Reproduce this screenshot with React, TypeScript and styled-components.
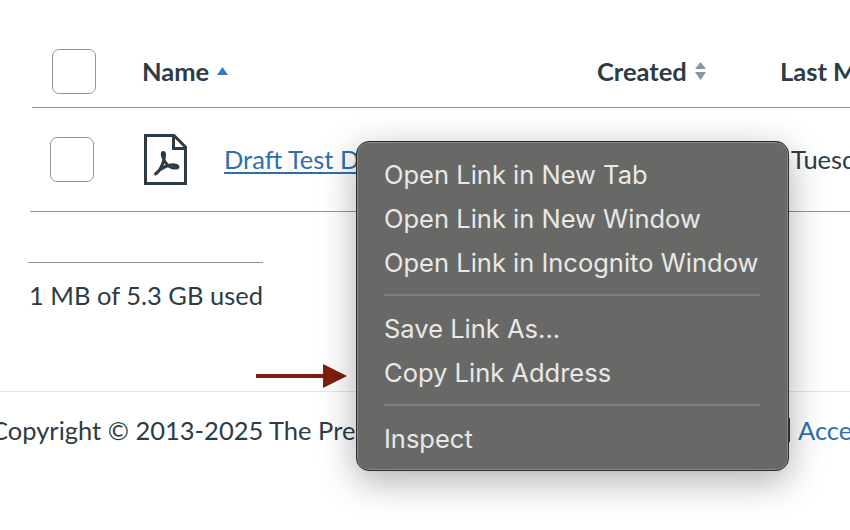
import React from 'react';
import styled, {createGlobalStyle} from 'styled-components';

const GlobalStyle = createGlobalStyle`
  html, body {
    margin: 0;
    padding: 0;
    background: #fff;
  }
  * {
    box-sizing: border-box;
  }
`

const Page = styled.div`
  position: relative;
  width: 850px;
  height: 530px;
  overflow: hidden;
  background: #fff;
  color: #2d3b45;
  font-family: Lato, 'Liberation Sans', sans-serif;
  font-size: 25.5px;
`

const HeaderRow = styled.div`
  display: flex;
  align-items: center;
  height: 108px;
  margin-left: 32px;
  padding: 36px 0 0 20px;
  border-bottom: 1px solid #8f9299;
  white-space: nowrap;
`

const FileRow = styled.div`
  display: flex;
  align-items: center;
  height: 104px;
  margin-left: 30px;
  padding-left: 20px;
  border-bottom: 1px solid #8f9299;
  white-space: nowrap;
`

const Checkbox = styled.div`
  flex: none;
  width: 44px;
  height: 45px;
  border: 1px solid #8d959f;
  border-radius: 7px;
  background: #fff;
`

const HeaderCell = styled.div<{$width: number; $first?: boolean}>`
  display: flex;
  align-items: center;
  flex: none;
  gap: 8px;
  width: ${p => p.$width}px;
  margin-top: -2px;
  margin-left: ${p => (p.$first ? 46 : 0)}px;
  font-weight: 700;
`

const FileIconWrap = styled.div`
  display: flex;
  flex: none;
  margin-left: 50px;
  width: 43px;
`

const NameCell = styled.div`
  flex: none;
  width: 567px;
  margin: -2px 0 0 37px;
`

const RowDate = styled.span`
  margin-top: -2px;
`

const FileLink = styled.a`
  color: #2d6fae;
  text-decoration: underline;
  text-underline-offset: 3px;
`

const Usage = styled.div`
  width: 235px;
  margin: 50px 0 0 28px;
  padding: 15px 0 0 1px;
  border-top: 1px solid #8f9299;
  line-height: 34px;
  white-space: nowrap;
`

const Footer = styled.footer`
  display: flex;
  align-items: center;
  height: 76px;
  margin-top: 79px;
  border-top: 1px solid #e6e6e6;
  white-space: nowrap;
`

const Copyright = styled.span`
  flex: none;
  width: 798px;
  margin-left: -9px;
`

const FooterBar = styled.span`
  flex: none;
  width: 1px;
  height: 24px;
  background: #2d3b45;
`

const FooterLink = styled.a`
  margin-left: 8px;
  color: #2d6fae;
`

const ContextMenu = styled.div`
  position: absolute;
  top: 141px;
  left: 356px;
  width: 433px;
  height: 330px;
  padding: 11px 27px 0;
  border: 1px solid #2b2b2b;
  border-radius: 13px;
  background: #686866;
  box-shadow: inset 0 0 0 1px #8a8a88, 0 10px 36px rgba(0, 0, 0, 0.32);
  font-family: Inter, 'Liberation Sans', sans-serif;
  color: #e8e8e6;
  white-space: nowrap;
`

const MenuItem = styled.div`
  height: 44px;
  line-height: 44px;
  font-size: 25.5px;
`

const MenuDivider = styled.div`
  width: 376px;
  height: 2px;
  margin: 9px 0 11px;
  background: #7e7e7c;
`

const PointerArrow = styled.svg`
  position: absolute;
  top: 364px;
  left: 256px;
`

const SortUp = () => (
    <svg width="11" height="8" viewBox="0 0 11 8">
        <path d="M5.5 0 L11 8 H0 Z" fill="#3b78bd"/>
    </svg>
);

const SortBoth = () => (
    <svg width="11" height="18" viewBox="0 0 11 18">
        <path d="M5.5 0 L11 7 H0 Z M0 10 H11 L5.5 18 Z" fill="#8a93a3"/>
    </svg>
);

const PdfIcon = () => (
    <svg width="43" height="51" viewBox="0 0 43 51" fill="none" stroke="#2d3b45">
        <path d="M1.5 1.5 H30 L41.5 13 V49.5 H1.5 Z" strokeWidth="3"/>
        <path d="M29.5 1.5 V14.5 H41.5" strokeWidth="3"/>
        <path
            d="M11.5 40 C15.5 38 19 30 20 25 C21 20 20.5 18 19 18.5 C17.5 19 18.5 24 21.5 28.5 C24.5 33 29 34.5 33 34 C35 33.5 34 31.5 31 31 C26 30 17 33 11.5 40 Z"
            strokeWidth="3"
            strokeLinejoin="round"
        />
    </svg>
);

export default function App() {
    return (
        <Page>
            <GlobalStyle/>
            <HeaderRow>
                <Checkbox/>
                <HeaderCell $width={455} $first>Name <SortUp/></HeaderCell>
                <HeaderCell $width={183}>Created <SortBoth/></HeaderCell>
                <HeaderCell $width={200}>Last Modified</HeaderCell>
            </HeaderRow>
            <FileRow>
                <Checkbox/>
                <FileIconWrap><PdfIcon/></FileIconWrap>
                <NameCell><FileLink>Draft Test Document.pdf</FileLink></NameCell>
                <RowDate>Tuesday</RowDate>
            </FileRow>
            <Usage>1 MB of 5.3 GB used</Usage>
            <Footer>
                <Copyright>Copyright © 2013-2025 The Pre</Copyright>
                <FooterBar/>
                <FooterLink>Accessibility</FooterLink>
            </Footer>
            <PointerArrow width="91" height="24" viewBox="0 0 91 24">
                <path d="M0 10 H67 V0 L91 12 L67 24 V14 H0 Z" fill="#7f1d0e"/>
            </PointerArrow>
            <ContextMenu>
                <MenuItem>Open Link in New Tab</MenuItem>
                <MenuItem>Open Link in New Window</MenuItem>
                <MenuItem>Open Link in Incognito Window</MenuItem>
                <MenuDivider/>
                <MenuItem>Save Link As...</MenuItem>
                <MenuItem>Copy Link Address</MenuItem>
                <MenuDivider/>
                <MenuItem>Inspect</MenuItem>
            </ContextMenu>
        </Page>
    );
}
